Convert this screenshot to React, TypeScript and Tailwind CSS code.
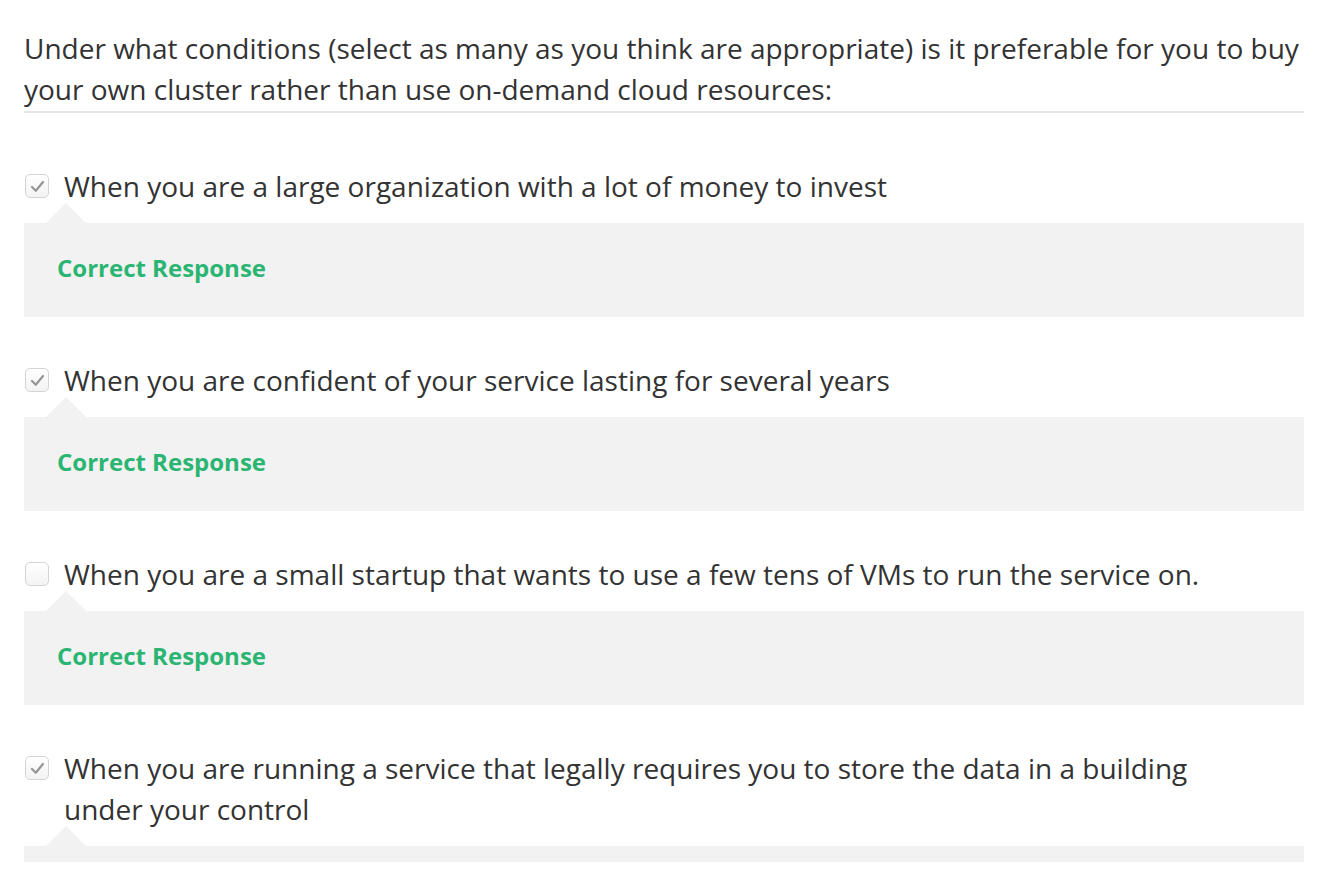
import React from 'react'

type Option = {
  label: string
  checked: boolean
  feedback?: string
}

const options: Option[] = [
  { label: 'When you are a large organization with a lot of money to invest', checked: true, feedback: 'Correct Response' },
  { label: 'When you are confident of your service lasting for several years', checked: true, feedback: 'Correct Response' },
  { label: 'When you are a small startup that wants to use a few tens of VMs to run the service on.', checked: false, feedback: 'Correct Response' },
  { label: 'When you are running a service that legally requires you to store the data in a building under your control', checked: true },
]

function Checkbox({ checked }: { checked: boolean }) {
  return (
    <span className="mt-[8px] flex h-[24px] w-[24px] shrink-0 items-center justify-center rounded-[5px] border border-[#d4d4d4] bg-gradient-to-b from-white to-[#f3f3f3]">
      {checked && (
        <svg width="15" height="13" viewBox="0 0 15 13" fill="none">
          <path d="M2 7 L5.8 10.8 L13 2" stroke="#959595" strokeWidth="2.2" strokeLinecap="round" strokeLinejoin="round" />
        </svg>
      )}
    </span>
  )
}

function OptionRow({ option }: { option: Option }) {
  return (
    <div>
      <label className="flex gap-[15px] pl-[1px]">
        <Checkbox checked={option.checked} />
        <span className="max-w-[1160px] text-[28px] leading-[41px] text-[#333]">{option.label}</span>
      </label>
      <div className="relative mt-[16px]">
        <span className="absolute left-[22px] top-[-20px] h-0 w-0 border-x-[20px] border-b-[20px] border-x-transparent border-b-[#f2f2f2]" />
        {option.feedback ? (
          <div className="flex h-[94px] items-center bg-[#f2f2f2] px-[33px] pb-[4px]">
            <span className="text-[24px] font-bold leading-none text-[#2bb573]">{option.feedback}</span>
          </div>
        ) : (
          <div className="h-[16px] bg-[#f2f2f2]" />
        )}
      </div>
    </div>
  )
}

export default function App() {
  return (
    <div className="min-h-screen bg-white pl-6 pr-[36px] pt-[28px]" style={{ fontFamily: '"Open Sans", sans-serif' }}>
      <p className="border-b-2 border-[#e6e6e6] pb-[1px] text-[28px] leading-[41px] text-[#333]">
        Under what conditions (select as many as you think are appropriate) is it preferable for you to buy your own cluster rather than use on-demand cloud resources:
      </p>
      <div className="mt-[53px] flex flex-col gap-[43px]">
        {options.map((o) => (
          <OptionRow key={o.label} option={o} />
        ))}
      </div>
    </div>
  )
}
